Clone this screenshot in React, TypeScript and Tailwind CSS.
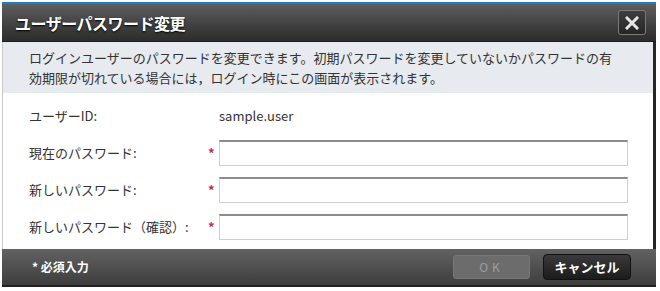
import React from 'react';

const font = { fontFamily: '"Noto Sans CJK JP", "Liberation Sans", sans-serif' };

function Field({ label, required, value }: { label: string; required?: boolean; value?: string }) {
  return (
    <div className="flex items-center h-[26px]">
      <div className="w-[179px] text-[13px] text-[#333]">{label}</div>
      <div className="w-[11px] text-[13px] text-[#c8285a] font-bold">{required ? '*' : ''}</div>
      {value !== undefined ? (
        <div className="text-[13px] text-[#333]">{value}</div>
      ) : (
        <input
          type="text"
          className="w-[409px] h-[26px] bg-white border border-[#cfcfcf] border-t-2 border-t-[#8c8c8c] outline-none px-1"
        />
      )}
    </div>
  );
}

export default function App() {
  return (
    <div className="w-[660px] h-[291px] bg-white pt-[2px] pl-[2px]" style={font}>
      <div className="w-[654px] h-[285px] flex flex-col border-t-2 border-[#1a7fc4] bg-white">
        {/* title bar */}
        <div className="h-[38px] flex items-center justify-between pl-[13px] pr-[10px] bg-gradient-to-b from-[#5e5e5e] to-[#2c2c2c] border-b border-[#1c1c1c]">
          <span className="text-white font-bold text-[16px] tracking-[-0.5px] [text-shadow:0_1px_2px_#000]">
            ユーザーパスワード変更
          </span>
          <button className="w-[28px] h-[25px] rounded-[3px] border border-[#7a7a7a] bg-gradient-to-b from-[#3e3e3e] to-[#262626] flex items-center justify-center">
            <svg width="14" height="14" viewBox="0 0 14 14">
              <path d="M2 2 L12 12 M12 2 L2 12" stroke="#e6e6e6" strokeWidth="3" strokeLinecap="square" />
            </svg>
          </button>
        </div>

        <div className="flex-1 flex flex-col border-l border-[#c8c8c8] border-r-[3px] border-r-[#262626]">
          {/* description */}
          <div className="h-[51px] bg-[#e7eaee] pl-[26px] pr-[34px] pt-[6px] text-[13px] leading-[20px] text-[#333]">
            ログインユーザーのパスワードを変更できます。初期パスワードを変更していないかパスワードの有効期限が切れている場合には，ログイン時にこの画面が表示されます。
          </div>

          {/* form */}
          <div className="flex-1 pl-[26px] pt-[10px] flex flex-col gap-[11px]">
            <Field label="ユーザーID:" value="sample.user" />
            <Field label="現在のパスワード:" required />
            <Field label="新しいパスワード:" required />
            <Field label="新しいパスワード（確認）:" required />
          </div>
        </div>

        {/* footer */}
        <div className="h-[38px] flex items-center justify-between pl-[30px] pr-[25px] bg-gradient-to-b from-[#626262] to-[#3e3e3e] border-b-2 border-[#222]">
          <span className="text-white text-[12px] font-bold">* 必須入力</span>
          <div className="flex items-center gap-[13px]">
            <button
              disabled
              className="w-[77px] h-[24px] rounded-[3px] bg-[#6c6c6c] border border-[#777] text-[#9c9c9c] text-[12px] tracking-[4px]"
            >
              OK
            </button>
            <button className="w-[88px] h-[26px] rounded-[4px] bg-gradient-to-b from-[#3a3a3a] to-[#1c1c1c] border border-[#111] text-white text-[13px] font-bold">
              キャンセル
            </button>
          </div>
        </div>
      </div>
    </div>
  );
}
